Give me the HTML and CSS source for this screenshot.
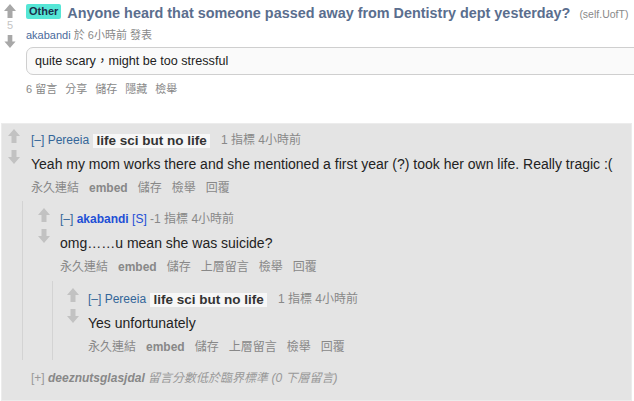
FILE: index.html
```html
<!DOCTYPE html>
<html>
<head>
<meta charset="utf-8">
<title>UofT</title>
<link rel="stylesheet" href="styles.css">
</head>
<body>
<div class="post">
  <div class="post-mid">
    <svg class="arrow up" width="12" height="14" viewBox="0 0 12 14"><path d="M6 0 L12 7 L8.5 7 L8.5 14 L3.5 14 L3.5 7 L0 7 Z"/></svg>
    <div class="score">5</div>
    <svg class="arrow down" width="12" height="13" viewBox="0 0 12 14"><path d="M3.5 0 H8.5 V7 H12 L6 14 L0 7 H3.5 Z"/></svg>
  </div>
  <div class="post-entry">
    <div class="title-row"><span class="badge">Other</span><a class="title">Anyone heard that someone passed away from Dentistry dept yesterday?</a><span class="domain">(self.UofT)</span></div>
    <div class="post-tagline"><a class="post-author">akabandi</a> 於 6小時前 發表</div>
    <div class="selftext">quite scary，might be too stressful</div>
    <ul class="post-buttons">
      <li>6 留言</li><li>分享</li><li>儲存</li><li>隱藏</li><li>檢舉</li>
    </ul>
  </div>
</div>

<div class="comments">
  <div class="comment c1">
    <div class="row">
      <div class="midcol m1">
        <svg class="arrow up" width="12" height="14" viewBox="0 0 12 14"><path d="M6 0 L12 7 L8.5 7 L8.5 14 L3.5 14 L3.5 7 L0 7 Z"/></svg>
        <svg class="arrow down" width="12" height="14" viewBox="0 0 12 14"><path d="M3.5 0 H8.5 V7 H12 L6 14 L0 7 H3.5 Z"/></svg>
      </div>
      <div class="entry">
        <div class="tagline"><a class="expand">[–]</a> <a class="author">Pereeia</a> <span class="flair">life sci but no life</span> <span class="meta">1 指標 4小時前</span></div>
        <div class="body">Yeah my mom works there and she mentioned a first year (?) took her own life. Really tragic :(</div>
        <ul class="buttons">
          <li>永久連結</li><li class="b">embed</li><li>儲存</li><li>檢舉</li><li>回覆</li>
        </ul>
      </div>
    </div>
    <div class="child child1">
      <div class="comment">
        <div class="row">
          <div class="midcol m2">
            <svg class="arrow up" width="12" height="14" viewBox="0 0 12 14"><path d="M6 0 L12 7 L8.5 7 L8.5 14 L3.5 14 L3.5 7 L0 7 Z"/></svg>
            <svg class="arrow down" width="12" height="14" viewBox="0 0 12 14"><path d="M3.5 0 H8.5 V7 H12 L6 14 L0 7 H3.5 Z"/></svg>
          </div>
          <div class="entry">
            <div class="tagline"><a class="expand">[–]</a> <a class="author submitter">akabandi</a> <span class="op">[S]</span> <span class="meta">-1 指標 4小時前</span></div>
            <div class="body">omg……u mean she was suicide?</div>
            <ul class="buttons">
              <li>永久連結</li><li class="b">embed</li><li>儲存</li><li>上層留言</li><li>檢舉</li><li>回覆</li>
            </ul>
          </div>
        </div>
        <div class="child child2">
          <div class="comment">
            <div class="row">
              <div class="midcol m3">
                <svg class="arrow up" width="12" height="14" viewBox="0 0 12 14"><path d="M6 0 L12 7 L8.5 7 L8.5 14 L3.5 14 L3.5 7 L0 7 Z"/></svg>
                <svg class="arrow down" width="12" height="14" viewBox="0 0 12 14"><path d="M3.5 0 H8.5 V7 H12 L6 14 L0 7 H3.5 Z"/></svg>
              </div>
              <div class="entry">
                <div class="tagline"><a class="expand">[–]</a> <a class="author">Pereeia</a> <span class="flair">life sci but no life</span> <span class="meta">1 指標 4小時前</span></div>
                <div class="body">Yes unfortunately</div>
                <ul class="buttons">
                  <li>永久連結</li><li class="b">embed</li><li>儲存</li><li>上層留言</li><li>檢舉</li><li>回覆</li>
                </ul>
              </div>
            </div>
          </div>
        </div>
      </div>
    </div>
  </div>

  <div class="comment collapsed">
    <div class="row">
      <div class="midcol m1 empty"></div>
      <div class="entry">
        <div class="tagline"><span class="plus">[+]</span> <a class="author">deeznutsglasjdal</a> <span class="cmsg">留言分數低於臨界標準 (0 下層留言)</span></div>
      </div>
    </div>
  </div>
</div>
</body>
</html>
```

FILE: styles.css
```css
* { box-sizing: border-box; }
html, body { margin: 0; padding: 0; background: #fff; overflow: hidden; }
body {
  font-family: "Liberation Sans", Arial, "Noto Sans CJK TC", sans-serif;
  color: #222;
  width: 634px;
  height: 401px;
}
a { text-decoration: none; }

/* ---------- post ---------- */
.post { display: flex; padding-top: 4px; }
.post-mid {
  width: 12px; flex: none;
  margin: 0 10px 0 4px;
  display: flex; flex-direction: column; align-items: center;
}
.arrow { display: block; }
.post-mid .arrow { fill: #a8a8a8; }
.score { font-size: 11px; line-height: 12px; height: 12px; margin-top: 1px; color: #c4c4c4; }
.post-mid .down { margin-top: 4px; }

.post-entry { flex: 1; min-width: 0; }
.title-row { display: flex; align-items: flex-start; white-space: nowrap; height: 19px; }
.badge {
  background: #55e6d6; color: #1b2e4a;
  font-size: 11px; font-weight: bold; line-height: 15px;
  padding: 0 3px; border-radius: 2px; margin-right: 6px;
}
.title { font-size: 14.4px; font-weight: bold; line-height: 19px; color: #5a6e8e; margin-right: 9px; }
.domain { font-size: 10.5px; line-height: 21px; color: #888; }

.post-tagline { margin-top: 5px; font-size: 11px; line-height: 14px; color: #888; }
.post-author { color: #4a6a9c; }

.selftext {
  margin-top: 5px; margin-right: -12px;
  border: 1px solid #cfcfcf; border-radius: 7px;
  background: #fafafa;
  padding: 5px 8px;
  font-size: 12.6px; line-height: 16px; color: #222;
}
.post-buttons {
  list-style: none; margin: 7px 0 0; padding: 0;
  display: flex; gap: 8px;
  font-size: 11px; line-height: 14px; color: #888;
}

/* ---------- comments ---------- */
.comments {
  margin: 27px 2px 0 1px;
  border: 1px solid #ececec;
  background: #e4e4e4;
  min-height: 278px;
}
.comment { padding-top: 10px; }
.comment.c1 { padding-top: 8px; }
.row { display: flex; }
.midcol { width: 12px; flex: none; margin-top: -3px; display: flex; flex-direction: column; }
.midcol .arrow { fill: #c2c2c2; }
.midcol .down { margin-top: 7px; }
.m1 { margin-left: 6px; margin-right: 11px; }
.m2 { margin-left: 15px; margin-right: 10px; }
.m3 { margin-left: 14px; margin-right: 9px; }
.entry { flex: 1; min-width: 0; }

.tagline { font-size: 12px; line-height: 16px; color: #888; white-space: nowrap; }
.expand { color: #369; }
.author { color: #369; }
.author.submitter { color: #1e4fd6; font-weight: bold; }
.op { color: #1e4fd6; }
.flair {
  display: inline-block;
  background: #f7f7f7; color: #333;
  font-size: 13.5px; font-weight: bold; line-height: 14px;
  padding: 0 3px; margin: 0 8px 0 1px;
  vertical-align: -1px;
}
.meta { color: #888; }

.body { margin-top: 7px; font-size: 14px; line-height: 18px; color: #222; }
.buttons {
  list-style: none; margin: 7px 0 0; padding: 0;
  display: flex; gap: 10px;
  font-size: 12px; line-height: 16px; color: #888;
}
.buttons .b { font-weight: bold; }

.child { border-left: 1px solid #d3d3d3; margin-top: 5px; }
.child1 { margin-left: 20px; }
.child2 { margin-left: 29px; margin-top: 6px; padding-bottom: 5px; }

.collapsed .tagline { font-style: italic; color: #999; }
.collapsed .plus { font-style: normal; color: #999; }
.collapsed .author { color: #888; font-weight: bold; }
.collapsed .cmsg { font-size: 12px; }
```
